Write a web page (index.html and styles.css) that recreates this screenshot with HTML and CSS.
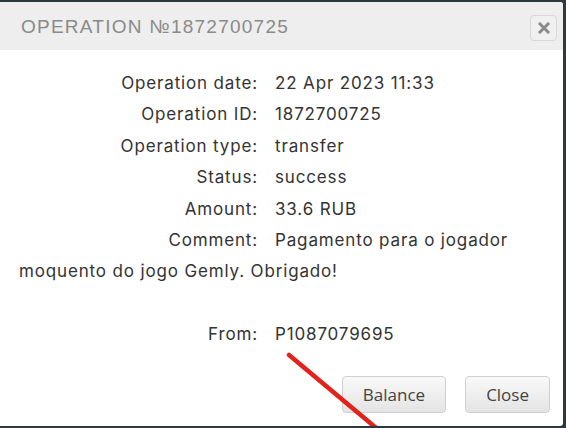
FILE: index.html
```html
<!DOCTYPE html>
<html>
<head>
<meta charset="utf-8">
<link rel="stylesheet" href="styles.css">
</head>
<body>
<div class="dialog">
  <div class="header">
    <span class="title">OPERATION №1872700725</span>
    <button class="x-btn" aria-label="close">
      <svg width="12" height="12" viewBox="0 0 12 12"><path d="M2 2L10 10M10 2L2 10" stroke="#8a8a8a" stroke-width="3" stroke-linecap="square"/></svg>
    </button>
  </div>
  <div class="content">
    <div class="row"><span class="label">Operation date:</span><span class="value">22 Apr 2023 11:33</span></div>
    <div class="row"><span class="label">Operation ID:</span><span class="value">1872700725</span></div>
    <div class="row"><span class="label">Operation type:</span><span class="value">transfer</span></div>
    <div class="row"><span class="label">Status:</span><span class="value">success</span></div>
    <div class="row"><span class="label">Amount:</span><span class="value">33.6 RUB</span></div>
    <div class="row"><span class="label">Comment:</span><span class="value">Pagamento para o jogador moquento do jogo Gemly. Obrigado!</span></div>
    <div class="row empty">&nbsp;</div>
    <div class="row"><span class="label">From:</span><span class="value">P1087079695</span></div>
  </div>
  <div class="footer">
    <button class="btn">Balance</button>
    <button class="btn">Close</button>
  </div>
  <svg class="mark" width="563" height="424" viewBox="0 0 563 424"><line x1="289" y1="353" x2="375" y2="425" stroke="#e3221c" stroke-width="4.5" stroke-linecap="round"/></svg>
</div>
</body>
</html>
```
FILE: styles.css
```css
html, body { margin: 0; padding: 0; }
body {
  background: #2c393f;
  width: 566px;
  height: 428px;
  overflow: hidden;
}
.dialog {
  position: relative;
  margin-top: 2px;
  width: 563px;
  height: 424px;
  background: #fff;
  border-radius: 0 3px 3px 0;
  display: flex;
  flex-direction: column;
  overflow: hidden;
}
.header {
  height: 48px;
  background: #eeeeee;
  display: flex;
  align-items: center;
  justify-content: space-between;
  padding: 0 6px 0 21px;
  box-sizing: border-box;
}
.title {
  font-family: "Liberation Sans", Arial, sans-serif;
  font-size: 19px;
  letter-spacing: 1.25px;
  color: #8a8a8a;
  margin-top: 1px;
}
.x-btn {
  width: 27px;
  height: 26px;
  border: 1px solid #d8d8d8;
  border-radius: 4px;
  background: #f0f0f0;
  display: flex;
  align-items: center;
  justify-content: center;
  padding: 0;
  margin-top: 3px;
}
.content {
  flex: 1;
  padding: 18px 19px 0 19px;
  font-family: Inter, "Noto Sans", sans-serif;
  font-size: 17px;
  letter-spacing: 0.85px;
  line-height: 31.4px;
  color: #333;
}
.label {
  display: inline-block;
  width: 239px;
  text-align: right;
  margin-right: 17px;
}
.footer {
  display: flex;
  justify-content: flex-end;
  gap: 19px;
  padding: 0 13px 13px 0;
}
.btn {
  font-family: "Open Sans", sans-serif;
  font-size: 17px;
  color: #444;
  height: 37px;
  padding: 0 20px;
  border: 1px solid #cfcfcf;
  border-radius: 4px;
  background: linear-gradient(#f9f9f9, #e4e4e4);
}
.mark {
  position: absolute;
  left: 0;
  top: 0;
  pointer-events: none;
}
```
